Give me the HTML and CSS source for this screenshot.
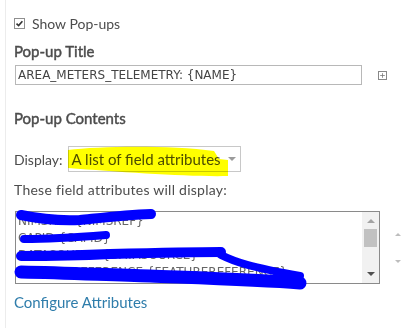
FILE: index.html
```html
<!DOCTYPE html>
<html lang="en">
<head>
    <meta charset="UTF-8">
    <meta name="viewport" content="width=device-width, initial-scale=1.0">
    <title>Pop-up settings</title>
    <link rel="stylesheet" href="styles.css">
</head>
<body>
    <div class="panel">
        <label class="check-row">
            <span class="checkbox">
                <svg width="9" height="9" viewBox="0 0 9 9"><path d="M1.5 4.6 L3.6 6.6 L7.4 2.2" fill="none" stroke="#333" stroke-width="1.6"/></svg>
            </span>
            <span>Show Pop-ups</span>
        </label>

        <h3 class="heading">Pop-up Title</h3>
        <div class="title-row">
            <div class="text-input">AREA_METERS_TELEMETRY: {NAME}</div>
            <span class="plus-btn">
                <svg width="9" height="9" viewBox="0 0 9 9"><path d="M4.5 1.5 V7.5 M1.5 4.5 H7.5" stroke="#777" stroke-width="1"/></svg>
            </span>
        </div>

        <h3 class="heading heading-contents">Pop-up Contents</h3>
        <div class="display-row">
            <span>Display:</span>
            <div class="select">
                <span>A list of field attributes</span>
                <span class="caret"></span>
            </div>
        </div>

        <p class="hint">These field attributes will display:</p>
        <div class="list-row">
            <div class="listbox">
                <div class="list-items">
                    <div>NIMSREF {NIMSREF}</div>
                    <div>CAPID {CAPID}</div>
                    <div>DATASOURCE {DATASOURCE}</div>
                    <div>FEATUREREFERENCE {FEATUREREFERENCE}</div>
                </div>
                <div class="scrollbar">
                    <span class="arrow-up"></span>
                    <span class="thumb"></span>
                    <span class="arrow-down"></span>
                </div>
            </div>
            <div class="move-btns">
                <span class="move-up"></span>
                <span class="move-down"></span>
            </div>
        </div>

        <a class="link" href="#">Configure Attributes</a>
    </div>

    <!-- marker scribbles drawn over the screenshot -->
    <svg class="scribbles" width="401" height="328" viewBox="0 0 401 328">
        <path class="highlight" d="M68 150 C100 146 170 145 214 151 L219 159 L228 160 L228 176 C190 177 120 172 68 168 Z" fill="#ffff00"/>
        <g fill="none" stroke="#0000ff" stroke-linecap="round" stroke-linejoin="round">
            <path d="M21 215 C40 219 60 221 80 220 C100 218 125 215 151 214" stroke-width="10"/>
            <path d="M24 239 C50 239 80 237 106 235" stroke-width="8"/>
            <path d="M21 256 C60 256 90 255 110 254 C150 253 190 252 221 252" stroke-width="10"/>
            <path d="M221 255 C235 262 250 267 300 276" stroke-width="8"/>
            <path d="M21 272 C70 273 110 275 150 276 C200 278 260 280 300 283" stroke-width="13"/>
        </g>
    </svg>
</body>
</html>
```

FILE: styles.css
```css
body {
    margin: 0;
    font-family: Lato, "Open Sans", sans-serif;
    font-size: 14px;
    color: #4c4c4c;
    background: #fff;
    position: relative;
    width: 401px;
    height: 328px;
    overflow: hidden;
}
.panel {
    margin-left: 5px;
    border-left: 1px solid #ececec;
    height: 328px;
    padding: 12px 0 0 8px;
    box-sizing: border-box;
}
.check-row {
    display: flex;
    align-items: center;
    gap: 7px;
    height: 23px;
    line-height: 20px;
}
.checkbox {
    width: 9px;
    height: 9px;
    border: 1px solid #8f8f8f;
    display: flex;
    align-items: center;
    justify-content: center;
    background: #fff;
}
.heading {
    margin: 6px 0 0;
    font-size: 15px;
    font-weight: 400;
    -webkit-text-stroke: 0.45px #4c4c4c;
    line-height: 20px;
    color: #4c4c4c;
}
.heading-contents {
    margin-top: 23px;
}
.title-row {
    display: flex;
    align-items: center;
    margin-top: 4px;
}
.text-input {
    margin-left: 1px;
    width: 343px;
    height: 18px;
    border: 1px solid #b8b8b8;
    padding-left: 2px;
    font-family: "DejaVu Sans", Verdana, sans-serif;
    font-size: 12px;
    line-height: 18px;
    color: #444;
}
.plus-btn {
    margin-left: 16px;
    width: 7px;
    height: 7px;
    border: 1px solid #888;
    display: flex;
    align-items: center;
    justify-content: center;
}
.display-row {
    display: flex;
    align-items: center;
    gap: 5px;
    margin-top: 18px;
}
.select {
    width: 165px;
    height: 24px;
    border: 1px solid #c8c8c8;
    display: flex;
    align-items: center;
    justify-content: space-between;
    padding: 0 3px 0 3px;
    font-size: 15px;
}
.caret {
    width: 0;
    height: 0;
    border-left: 4px solid transparent;
    border-right: 4px solid transparent;
    border-top: 4px solid #9b9b9b;
    margin-right: 1px;
}
.hint {
    margin: 8px 0 0;
    line-height: 20px;
    letter-spacing: 0.25px;
}
.list-row {
    display: flex;
    margin-top: 11px;
}
.listbox {
    margin-left: 1px;
    width: 365px;
    height: 71px;
    border: 1px solid #8a8a8a;
    display: flex;
    justify-content: space-between;
}
.list-items {
    padding: 1px 0 0 2px;
    font-family: "DejaVu Sans", Verdana, sans-serif;
    font-size: 12px;
    line-height: 17px;
    color: #666;
    overflow: hidden;
    white-space: nowrap;
}
.scrollbar {
    width: 17px;
    background: #f1f1f1;
    display: flex;
    flex-direction: column;
    align-items: center;
}
.arrow-up {
    margin-top: 7px;
    border-left: 4px solid transparent;
    border-right: 4px solid transparent;
    border-bottom: 4px solid #a3a3a3;
}
.thumb {
    margin-top: 6px;
    width: 13px;
    height: 18px;
    background: #c1c1c1;
}
.arrow-down {
    margin-top: auto;
    margin-bottom: 7px;
    border-left: 4px solid transparent;
    border-right: 4px solid transparent;
    border-top: 4px solid #505050;
}
.move-btns {
    margin-left: 15px;
    display: flex;
    flex-direction: column;
    padding-top: 22px;
    gap: 24px;
}
.move-up {
    border-left: 3px solid transparent;
    border-right: 3px solid transparent;
    border-bottom: 3px solid #bdbdbd;
}
.move-down {
    border-left: 3px solid transparent;
    border-right: 3px solid transparent;
    border-top: 3px solid #bdbdbd;
}
.link {
    display: block;
    margin-top: 8px;
    font-size: 15px;
    line-height: 20px;
    color: #2f7dab;
    text-decoration: none;
}
.scribbles {
    position: absolute;
    top: 0;
    left: 0;
    pointer-events: none;
}
.highlight {
    mix-blend-mode: multiply;
}
```
